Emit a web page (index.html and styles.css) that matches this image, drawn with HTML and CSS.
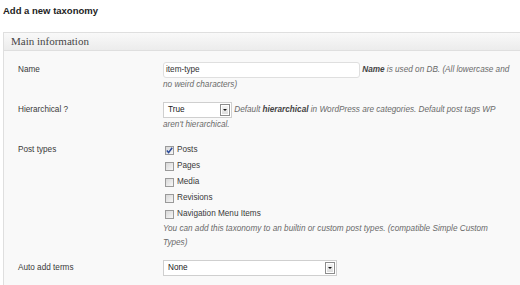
FILE: index.html
```html
<!DOCTYPE html>
<html>
<head>
<meta charset="utf-8">
<link rel="stylesheet" href="styles.css">
</head>
<body>
<h2 class="title">Add a new taxonomy</h2>
<div class="panel">
  <div class="panel-head">Main information</div>
  <div class="panel-body">
    <div class="row">
      <div class="label">Name</div>
      <div class="field"><span class="input">item-type</span> <span class="desc"><b>Name</b> is used on DB. (All lowercase and no weird characters)</span></div>
    </div>
    <div class="row">
      <div class="label">Hierarchical ?</div>
      <div class="field"><span class="select select-sm"><span class="sel-text">True</span><span class="arrow"></span></span> <span class="desc">Default <b>hierarchical</b> in WordPress are categories. Default post tags WP aren't hierarchical.</span></div>
    </div>
    <div class="row">
      <div class="label">Post types</div>
      <div class="field">
        <div class="check-line"><span class="cb checked"><svg viewBox="0 0 9 9" width="9" height="9"><path d="M1.8 4.6 L3.6 6.6 L7.2 1.8" fill="none" stroke="#2a4a9a" stroke-width="1.5"/></svg></span>Posts</div>
        <div class="check-line"><span class="cb"></span>Pages</div>
        <div class="check-line"><span class="cb"></span>Media</div>
        <div class="check-line"><span class="cb"></span>Revisions</div>
        <div class="check-line"><span class="cb"></span>Navigation Menu Items</div>
        <div class="desc block">You can add this taxonomy to an builtin or custom post types. (compatible Simple Custom Types)</div>
      </div>
    </div>
    <div class="row">
      <div class="label">Auto add terms</div>
      <div class="field"><span class="select select-lg"><span class="sel-text">None</span><span class="arrow"></span></span></div>
    </div>
  </div>
</div>
</body>
</html>
```

FILE: styles.css
```css
html, body {
  margin: 0;
  padding: 0;
  background: #ffffff;
  overflow: hidden;
}
body {
  width: 520px;
  height: 285px;
  font-family: "Liberation Sans", Arial, sans-serif;
  color: #333333;
  font-size: 8.2px;
}
.title {
  margin: 0;
  padding: 4px 0 0 3px;
  height: 28px;
  box-sizing: border-box;
  font-size: 9.5px;
  line-height: 14px;
  font-weight: bold;
  color: #222222;
}
.panel {
  margin-left: 3px;
  width: 517px;
  box-sizing: border-box;
  border: 1px solid #dfdfdf;
  border-right: none;
  background: #f9f9f9;
  margin-top: 4px;
}
.panel-head {
  height: 17px;
  line-height: 17px;
  padding-left: 7px;
  font-family: "Liberation Serif", Georgia, serif;
  font-size: 11px;
  color: #464646;
  background: linear-gradient(#f9f9f9, #ececec);
  border-bottom: 1px solid #dfdfdf;
}
.panel-body {
  padding-top: 6px;
  padding-bottom: 10px;
}
.row {
  display: grid;
  grid-template-columns: 145px 349px;
  padding: 5px 0 5px 14px;
  line-height: 15px;
}
.label {
  color: #3a3a3a;
}
.field {
  color: #3a3a3a;
}
.desc {
  font-style: italic;
  color: #6a6a6a;
}
.desc b {
  color: #444444;
}
.desc.block {
  line-height: 14px;
}
.input {
  display: inline-block;
  box-sizing: border-box;
  width: 197px;
  height: 16px;
  margin: -1px 0;
  vertical-align: middle;
  line-height: 14px;
  padding-left: 2px;
  background: #ffffff;
  border: 1px solid #dfdfdf;
  border-radius: 3px;
  color: #333333;
}
.select {
  display: inline-flex;
  align-items: center;
  justify-content: space-between;
  box-sizing: border-box;
  height: 16px;
  margin: -1px 0;
  vertical-align: middle;
  padding-left: 4px;
  padding-right: 1px;
  background: #ffffff;
  border: 1px solid #cfcfcf;
  color: #222222;
  line-height: 12px;
}
.select-sm {
  width: 69px;
}
.select-lg {
  width: 174px;
}
.arrow {
  position: relative;
  display: inline-block;
  box-sizing: border-box;
  width: 10px;
  height: 12px;
  border: 1px solid #8d8d8d;
  background: linear-gradient(#f6f6f6, #dadada);
  box-shadow: inset 0 0 0 1px #ffffff;
}
.arrow::after {
  content: "";
  position: absolute;
  left: 2px;
  top: 4px;
  border-left: 2px solid transparent;
  border-right: 2px solid transparent;
  border-top: 2px solid #111111;
}
.check-line {
  line-height: 16px;
  display: flex;
  align-items: center;
}
.cb {
  display: inline-block;
  box-sizing: border-box;
  width: 9px;
  height: 9px;
  margin: 0 3px 0 2px;
  border: 1px solid #9a9a9a;
  background: linear-gradient(135deg, #d8d8d8, #f7f7f7);
  position: relative;
}
.cb svg {
  position: absolute;
  left: -1px;
  top: -1px;
}
```
